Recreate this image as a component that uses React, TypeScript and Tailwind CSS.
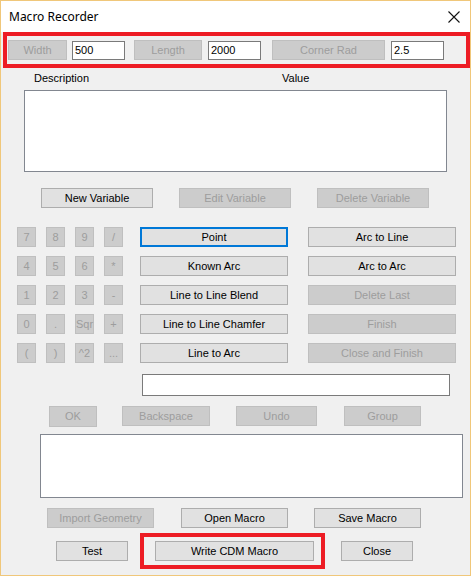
import React from "react";

const font = { fontFamily: '"Liberation Sans", Arial, sans-serif' };

type BtnProps = {
  label: string;
  w: string;
  disabled?: boolean;
  focused?: boolean;
  className?: string;
};

const Btn = ({ label, w, disabled, focused, className = "" }: BtnProps) => {
  const tone = disabled
    ? "bg-[#cccccc] border border-[#bfbfbf] text-[#9d9d9d]"
    : focused
    ? "bg-[#e1e1e1] border-2 border-[#0078d7] text-black"
    : "bg-[#e1e1e1] border border-[#adadad] text-black";
  return (
    <div
      className={`${w} h-[20px] shrink-0 flex items-center justify-center text-[11px] leading-none whitespace-nowrap ${tone} ${className}`}
    >
      {label}
    </div>
  );
};

const Field = ({ value, className = "" }: { value: string; className?: string }) => (
  <div
    className={`w-[53px] h-[19px] shrink-0 bg-white border border-[#7a7a7a] flex items-center pl-[2px] text-[11px] leading-none text-black ${className}`}
  >
    {value}
  </div>
);

const keys = ["7", "8", "9", "/", "4", "5", "6", "*", "1", "2", "3", "-", "0", ".", "Sqr", "+", "(", ")", "^2", "..."];

const middle = ["Point", "Known Arc", "Line to Line Blend", "Line to Line Chamfer", "Line to Arc"];
const right: [string, boolean][] = [
  ["Arc to Line", false],
  ["Arc to Arc", false],
  ["Delete Last", true],
  ["Finish", true],
  ["Close and Finish", true],
];

export default function App() {
  return (
    <div className="w-[475px] h-[579px] bg-white" style={font}>
      <div className="w-[471px] h-[576px] border border-[#f0c77a] flex flex-col">
        {/* title bar */}
        <div className="h-[31px] shrink-0 bg-white flex items-center justify-between pl-[8px] pr-[10px]">
          <span
            className="text-[12px] text-black pt-[1px]"
            style={{ fontFamily: '"Noto Sans", "Liberation Sans", sans-serif' }}
          >
            Macro Recorder
          </span>
          <svg width="12" height="12" viewBox="0 0 12 12" className="mt-[1px]">
            <path d="M0.5 0.5 L11.5 11.5 M11.5 0.5 L0.5 11.5" stroke="#111" strokeWidth="1.1" />
          </svg>
        </div>

        <div className="flex-1 bg-[#f0f0f0] flex flex-col">
          {/* dimensions row, highlighted */}
          <div className="ml-[2px] w-[467px] h-[36px] border-[4px] border-[#ed1c24] pt-[4px] pl-[1px] flex items-start">
            <Btn label="Width" w="w-[59px]" disabled />
            <Field value="500" className="ml-[5px] mt-[1px]" />
            <Btn label="Length" w="w-[68px]" disabled className="ml-[9px]" />
            <Field value="2000" className="ml-[6px] mt-[1px]" />
            <Btn label="Corner Rad" w="w-[113px]" disabled className="ml-[11px]" />
            <Field value="2.5" className="ml-[6px] mt-[1px]" />
          </div>

          {/* variable list */}
          <div className="mt-[3px] h-[14px] flex items-center text-[11px] text-black">
            <span className="ml-[33px] w-[248px]">Description</span>
            <span>Value</span>
          </div>
          <div className="mt-[5px] ml-[23px] w-[423px] h-[82px] bg-white border border-[#828790]" />

          <div className="mt-[16px] flex">
            <Btn label="New Variable" w="w-[112px]" className="ml-[40px]" />
            <Btn label="Edit Variable" w="w-[112px]" disabled className="ml-[26px]" />
            <Btn label="Delete Variable" w="w-[112px]" disabled className="ml-[26px]" />
          </div>

          {/* keypad and geometry buttons */}
          <div className="mt-[19px] flex items-start">
            <div className="ml-[16px] grid grid-cols-[19px_19px_19px_19px] gap-x-[10px] gap-y-[9px]">
              {keys.map((k) => (
                <Btn key={k} label={k} w="w-[19px]" disabled />
              ))}
            </div>
            <div className="ml-[17px] flex flex-col gap-[9px]">
              {middle.map((m, i) => (
                <Btn key={m} label={m} w="w-[148px]" focused={i === 0} />
              ))}
            </div>
            <div className="ml-[20px] flex flex-col gap-[9px]">
              {right.map(([r, d]) => (
                <Btn key={r} label={r} w="w-[148px]" disabled={d} />
              ))}
            </div>
          </div>

          <div className="mt-[11px] ml-[141px] w-[308px] h-[22px] bg-white border border-[#7a7a7a]" />

          <div className="mt-[10px] flex">
            <Btn label="OK" w="w-[48px]" disabled className="ml-[48px] h-[21px]" />
            <Btn label="Backspace" w="w-[88px]" disabled className="ml-[25px]" />
            <Btn label="Undo" w="w-[81px]" disabled className="ml-[26px]" />
            <Btn label="Group" w="w-[77px]" disabled className="ml-[27px]" />
          </div>

          <div className="mt-[7px] ml-[39px] w-[423px] h-[64px] bg-white border border-[#828790]" />

          <div className="mt-[10px] flex">
            <Btn label="Import Geometry" w="w-[107px]" disabled className="ml-[46px]" />
            <Btn label="Open Macro" w="w-[107px]" className="ml-[27px]" />
            <Btn label="Save Macro" w="w-[107px]" className="ml-[26px]" />
          </div>

          <div className="mt-[13px] flex">
            <Btn label="Test" w="w-[72px]" className="ml-[55px]" />
            <div className="relative ml-[27px]">
              <Btn label="Write CDM Macro" w="w-[159px]" />
              <div className="absolute -left-[15px] -top-[8px] w-[185px] h-[36px] border-[4px] border-[#ed1c24] pointer-events-none" />
            </div>
            <Btn label="Close" w="w-[72px]" className="ml-[27px]" />
          </div>
        </div>
      </div>
    </div>
  );
}
